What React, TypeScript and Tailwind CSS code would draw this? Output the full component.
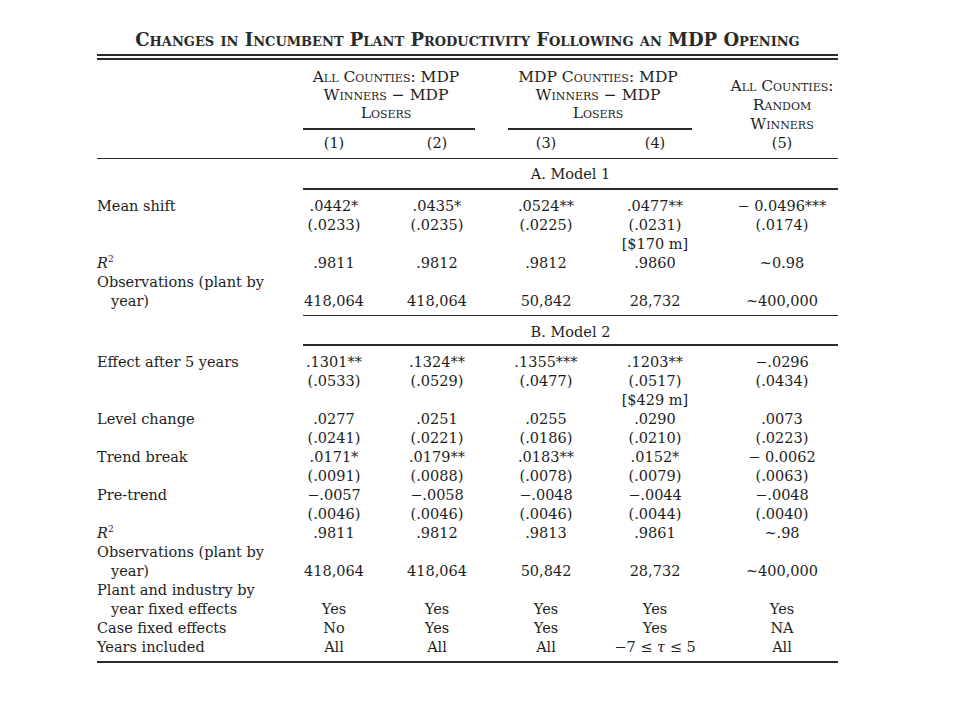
import React from "react";

const GRID = "grid grid-cols-[186px_102px_104px_114px_104px_131px]";

type Cell = React.ReactNode;

function Row({ label, cells, indent }: { label?: Cell; cells?: Cell[]; indent?: boolean }) {
  const c = cells ?? ["", "", "", "", ""];
  return (
    <div className={`${GRID} h-[19px] leading-[19px] whitespace-nowrap`}>
      <div className={indent ? "pl-[14px]" : ""}>{label}</div>
      <div className="text-center">{c[0]}</div>
      <div className="text-center">{c[1]}</div>
      <div className="text-center">{c[2]}</div>
      <div className="text-center">{c[3]}</div>
      <div className="text-center pl-[19px]">{c[4]}</div>
    </div>
  );
}

const R2 = (
  <span>
    <i>R</i>
    <span className="inline-block text-[9px] leading-[9px] align-top relative top-[1px]">2</span>
  </span>
);

function PanelRule() {
  return <div className="ml-[206px] h-[1.5px] bg-[#2a2a2a]" />;
}

export default function App() {
  return (
    <div className="w-[960px] h-[720px] bg-white text-[#1e1e1e] font-['DejaVu_Serif',serif] text-[14.5px]">
      <div className="ml-[97px] w-[741px] pt-[28px]">
        <div className="text-center text-[18px] font-semibold leading-[24px] [font-variant:small-caps] h-[26px] text-[#2a2a2a] whitespace-nowrap">
          Changes in Incumbent Plant Productivity Following an MDP Opening
        </div>
        <div className="h-[2px] bg-[#2a2a2a]" />
        <div className="h-[2px]" />
        <div className="h-[2px] bg-[#2a2a2a]" />

        {/* Header */}
        <div className="flex items-end pt-[8px] pb-[5px] text-[15.5px]">
          <div className="w-[186px]" />
          <div className="w-[206px] flex flex-col items-center">
            <div className="text-center leading-[18px] [font-variant:small-caps] whitespace-nowrap">
              All Counties: MDP
              <br />
              Winners − MDP
              <br />
              Losers
            </div>
            <div className="self-stretch ml-[20px] mr-[14px] mt-[6px] h-[1.5px] bg-[#2a2a2a]" />
            <div className="flex self-stretch mt-[4px] leading-[19px] text-[14.5px]">
              <div className="w-[102px] text-center">(1)</div>
              <div className="w-[104px] text-center">(2)</div>
            </div>
          </div>
          <div className="w-[218px] flex flex-col items-center">
            <div className="text-center leading-[18px] [font-variant:small-caps] whitespace-nowrap">
              MDP Counties: MDP
              <br />
              Winners − MDP
              <br />
              Losers
            </div>
            <div className="self-stretch ml-[19px] mr-[15px] mt-[6px] h-[1.5px] bg-[#2a2a2a]" />
            <div className="flex self-stretch mt-[4px] leading-[19px] text-[14.5px]">
              <div className="w-[114px] text-center">(3)</div>
              <div className="w-[104px] text-center">(4)</div>
            </div>
          </div>
          <div className="w-[131px] pl-[19px] text-center leading-[19px] [font-variant:small-caps] whitespace-nowrap">
            All Counties:
            <br />
            Random
            <br />
            Winners
            <br />
            <span className="text-[14.5px] [font-variant:normal]">(5)</span>
          </div>
        </div>
        <div className="h-[1.5px] bg-[#2a2a2a]" />

        {/* Panel A */}
        <div className="pt-[6px] pb-[4px] pl-[206px] text-center leading-[19px]">A. Model 1</div>
        <PanelRule />
        <div className="pt-[7px] pb-[4px]">
          <Row label="Mean shift" cells={[".0442*", ".0435*", ".0524**", ".0477**", "− 0.0496***"]} />
          <Row cells={["(.0233)", "(.0235)", "(.0225)", "(.0231)", "(.0174)"]} />
          <Row cells={["", "", "", "[$170 m]", ""]} />
          <Row label={R2} cells={[".9811", ".9812", ".9812", ".9860", "~0.98"]} />
          <Row label="Observations (plant by" />
          <Row label="year)" indent cells={["418,064", "418,064", "50,842", "28,732", "~400,000"]} />
        </div>
        <PanelRule />

        {/* Panel B */}
        <div className="pt-[7px] pb-[2px] pl-[206px] text-center leading-[19px]">B. Model 2</div>
        <PanelRule />
        <div className="pt-[7px] pb-[4px]">
          <Row label="Effect after 5 years" cells={[".1301**", ".1324**", ".1355***", ".1203**", "−.0296"]} />
          <Row cells={["(.0533)", "(.0529)", "(.0477)", "(.0517)", "(.0434)"]} />
          <Row cells={["", "", "", "[$429 m]", ""]} />
          <Row label="Level change" cells={[".0277", ".0251", ".0255", ".0290", ".0073"]} />
          <Row cells={["(.0241)", "(.0221)", "(.0186)", "(.0210)", "(.0223)"]} />
          <Row label="Trend break" cells={[".0171*", ".0179**", ".0183**", ".0152*", "− 0.0062"]} />
          <Row cells={["(.0091)", "(.0088)", "(.0078)", "(.0079)", "(.0063)"]} />
          <Row label="Pre-trend" cells={["−.0057", "−.0058", "−.0048", "−.0044", "−.0048"]} />
          <Row cells={["(.0046)", "(.0046)", "(.0046)", "(.0044)", "(.0040)"]} />
          <Row label={R2} cells={[".9811", ".9812", ".9813", ".9861", "~.98"]} />
          <Row label="Observations (plant by" />
          <Row label="year)" indent cells={["418,064", "418,064", "50,842", "28,732", "~400,000"]} />
          <Row label="Plant and industry by" />
          <Row label="year fixed effects" indent cells={["Yes", "Yes", "Yes", "Yes", "Yes"]} />
          <Row label="Case fixed effects" cells={["No", "Yes", "Yes", "Yes", "NA"]} />
          <Row
            label="Years included"
            cells={[
              "All",
              "All",
              "All",
              <span>
                −7 ≤ <i>τ</i> ≤ 5
              </span>,
              "All",
            ]}
          />
        </div>
        <div className="h-[2px] bg-[#2a2a2a]" />
      </div>
    </div>
  );
}
